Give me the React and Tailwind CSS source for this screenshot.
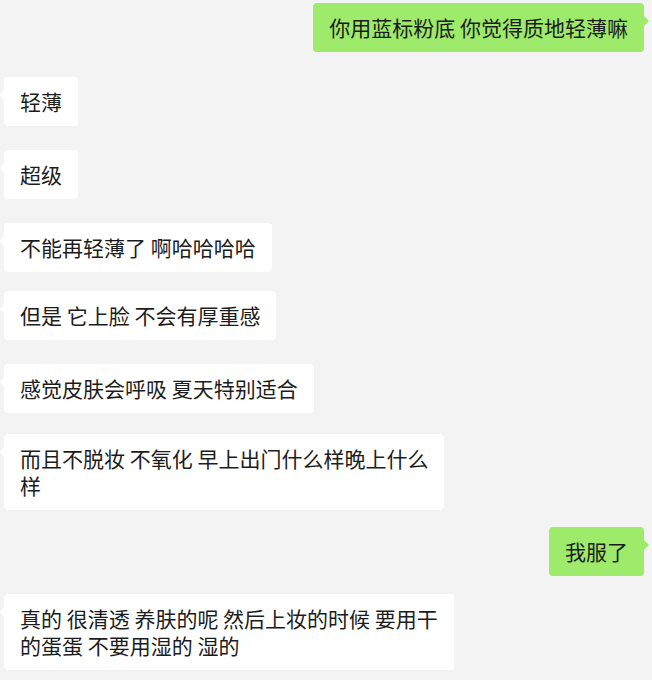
import React from "react";

// wrapped messages keep their line breaks so the bubble shrinks to the longest line
const messages = [
  { me: true, text: "你用蓝标粉底 你觉得质地轻薄嘛", mt: "mt-0" },
  { me: false, text: "轻薄", mt: "mt-[25px]" },
  { me: false, text: "超级", mt: "mt-[24px]" },
  { me: false, text: "不能再轻薄了 啊哈哈哈哈", mt: "mt-[24px]" },
  { me: false, text: "但是 它上脸 不会有厚重感", mt: "mt-[19px]" },
  { me: false, text: "感觉皮肤会呼吸 夏天特别适合", mt: "mt-[24px]" },
  { me: false, text: "而且不脱妆 不氧化 早上出门什么样晚上什么\n样", mt: "mt-[21px]" },
  { me: true, text: "我服了", mt: "mt-[17px]" },
  { me: false, text: "真的 很清透 养肤的呢 然后上妆的时候 要用干\n的蛋蛋 不要用湿的 湿的", mt: "mt-[18px]" },
];

function Bubble({ me, text, mt }) {
  return (
    <div className={`flex ${me ? "justify-end pr-[8px]" : "justify-start pl-[4px]"} ${mt}`}>
      <div
        className={`relative max-w-[470px] whitespace-pre-line rounded-[4px] px-4 py-[11px] text-[21px] leading-[27px] text-[#1c1c1c] ${
          me ? "bg-[#9eea6a]" : "bg-white"
        }`}
      >
        {me ? (
          <span className="absolute right-[-5px] top-[13px] h-0 w-0 border-y-[5px] border-l-[5px] border-y-transparent border-l-[#9eea6a]" />
        ) : (
          <span className="absolute left-[-4px] top-[13px] h-0 w-0 border-y-[5px] border-r-[4px] border-y-transparent border-r-white" />
        )}
        {text}
      </div>
    </div>
  );
}

export default function App() {
  return (
    <div
      className="min-h-[680px] w-[652px] bg-[#f3f3f3] pt-[3px]"
      style={{ fontFamily: '"Noto Sans CJK SC", "Noto Sans", sans-serif' }}
    >
      {messages.map((m, i) => (
        <Bubble key={i} {...m} />
      ))}
    </div>
  );
}
